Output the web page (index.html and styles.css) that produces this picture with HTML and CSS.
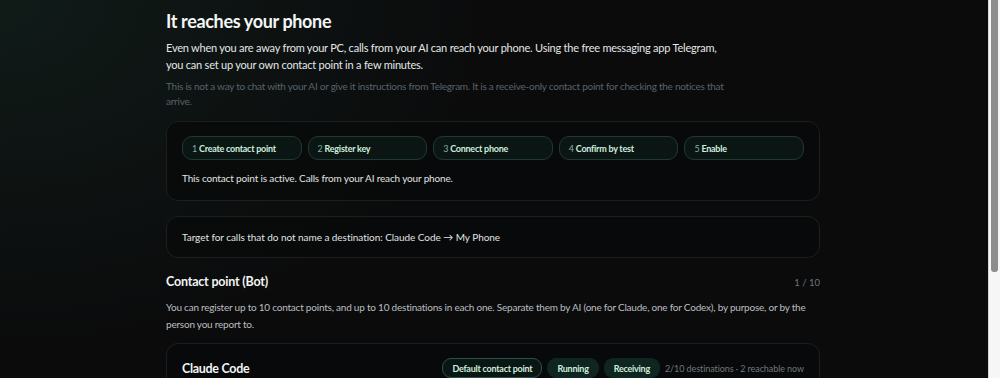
FILE: index.html
```html
<!DOCTYPE html>
<html lang="en">
<head>
<meta charset="utf-8">
<title>It reaches your phone</title>
<link rel="stylesheet" href="styles.css">
</head>
<body>
<main class="page">
  <h1 class="title">It reaches your phone</h1>
  <p class="lead">Even when you are away from your PC, calls from your AI can reach your phone. Using the free messaging app Telegram, you can set up your own contact point in a few minutes.</p>
  <p class="note">This is not a way to chat with your AI or give it instructions from Telegram. It is a receive-only contact point for checking the notices that arrive.</p>

  <section class="card steps-card">
    <ol class="steps">
      <li class="step"><span class="num">1</span> Create contact point</li>
      <li class="step"><span class="num">2</span> Register key</li>
      <li class="step"><span class="num">3</span> Connect phone</li>
      <li class="step"><span class="num">4</span> Confirm by test</li>
      <li class="step"><span class="num">5</span> Enable</li>
    </ol>
    <p class="status">This contact point is active. Calls from your AI reach your phone.</p>
  </section>

  <section class="card target-card">
    <p class="target">Target for calls that do not name a destination: Claude Code → My Phone</p>
  </section>

  <div class="section-head">
    <h2 class="section-title">Contact point (Bot)</h2>
    <span class="count">1 / 10</span>
  </div>
  <p class="section-desc">You can register up to 10 contact points, and up to 10 destinations in each one. Separate them by AI (one for Claude, one for Codex), by purpose, or by the person you report to.</p>

  <section class="card bot-card">
    <div class="bot-head">
      <h3 class="bot-name">Claude Code</h3>
      <div class="badges">
        <span class="badge badge-outline">Default contact point</span>
        <span class="badge">Running</span>
        <span class="badge">Receiving</span>
        <span class="meta">2/10 destinations · 2 reachable now</span>
      </div>
    </div>
  </section>
</main>
<div class="scrollbar" aria-hidden="true"><div class="scrollbar-thumb"></div></div>
</body>
</html>
```
FILE: styles.css
```css
html {
  background: #0b0b0c;
}
body {
  margin: 0;
  padding-right: 14px;
  min-height: 100vh;
  font-family: "Lato", "Open Sans", sans-serif;
  color: #e6e9e9;
  background:
    radial-gradient(ellipse 700px 500px at 0% 0%, rgba(20, 40, 34, 0.55), rgba(20, 40, 34, 0) 70%),
    radial-gradient(ellipse 900px 300px at 100% 100%, rgba(22, 22, 40, 0.6), rgba(22, 22, 40, 0) 70%),
    #0b0b0c;
}
.scrollbar {
  position: fixed;
  top: 0;
  right: 0;
  width: 11px;
  height: 100vh;
  background: #f6f6f6;
  border-left: 1px solid #d8d8d8;
}
.scrollbar-thumb {
  margin: 0 2px 0 2px;
  height: 272px;
  background: #8c8c8c;
  border-radius: 0 0 3px 3px;
}
.page {
  width: 654px;
  margin: 0 auto;
  padding: 8px 0 160px;
}
.title {
  margin: 0;
  font-size: 18px;
  font-weight: 700;
  line-height: 26px;
  color: #f4f6f6;
  letter-spacing: -0.35px;
}
.lead {
  max-width: 565px;
  margin: 5px 0 0;
  font-size: 11px;
  line-height: 17px;
  color: #e4e7e7;
  letter-spacing: -0.22px;
}
.note {
  max-width: 565px;
  margin: 6px 0 0;
  font-size: 10px;
  line-height: 15px;
  color: #58626b;
  letter-spacing: -0.25px;
}
.card {
  border: 1px solid #1b1f1f;
  border-radius: 12px;
  background: rgba(8, 9, 9, 0.75);
}
.steps-card {
  margin-top: 12px;
  padding: 14px 15px 15px;
}
.steps {
  list-style: none;
  margin: 0;
  padding: 0;
  display: grid;
  grid-template-columns: repeat(5, 1fr);
  gap: 6px;
}
.step {
  height: 24px;
  box-sizing: border-box;
  display: flex;
  align-items: center;
  padding: 0 9px;
  border: 1px solid #1f3a31;
  border-radius: 10px;
  background: #0b1614;
  font-size: 9px;
  font-weight: 700;
  color: #cdeedd;
  white-space: nowrap;
  letter-spacing: -0.25px;
}
.num {
  color: #7fb399;
  font-weight: 400;
  margin-right: 2px;
}
.status {
  margin: 11px 0 0;
  font-size: 10px;
  line-height: 14px;
  color: #e0e4e4;
  letter-spacing: -0.15px;
}
.target-card {
  margin-top: 15px;
  padding: 13px 15px 13px;
}
.target {
  margin: 0;
  font-size: 10px;
  line-height: 14px;
  color: #e0e4e4;
  letter-spacing: -0.05px;
}
.section-head {
  margin-top: 15px;
  display: flex;
  align-items: baseline;
  justify-content: space-between;
}
.section-title {
  margin: 0;
  font-size: 12.5px;
  font-weight: 700;
  line-height: 18px;
  color: #f2f4f4;
  letter-spacing: -0.2px;
}
.count {
  font-size: 9.5px;
  color: #6d7478;
}
.section-desc {
  margin: 8px 0 0;
  font-size: 10px;
  line-height: 17px;
  color: #b9bfc1;
  letter-spacing: -0.22px;
}
.bot-card {
  margin-top: 10px;
  padding: 14px 15px 40px;
}
.bot-head {
  display: flex;
  align-items: center;
  justify-content: space-between;
}
.bot-name {
  margin: 0;
  font-size: 12.5px;
  font-weight: 700;
  color: #f2f4f4;
  letter-spacing: -0.3px;
}
.badges {
  display: flex;
  align-items: center;
  gap: 5px;
}
.badge {
  height: 20px;
  box-sizing: border-box;
  display: inline-flex;
  align-items: center;
  padding: 0 9px;
  border-radius: 9px;
  background: #0f2520;
  border: 1px solid #0f2520;
  font-size: 9px;
  font-weight: 700;
  color: #cdeedd;
  letter-spacing: -0.25px;
}
.badge-outline {
  background: #0a1613;
  border-color: #2a5244;
}
.meta {
  margin-left: 0;
  font-size: 9px;
  color: #707779;
  letter-spacing: -0.08px;
}
```
